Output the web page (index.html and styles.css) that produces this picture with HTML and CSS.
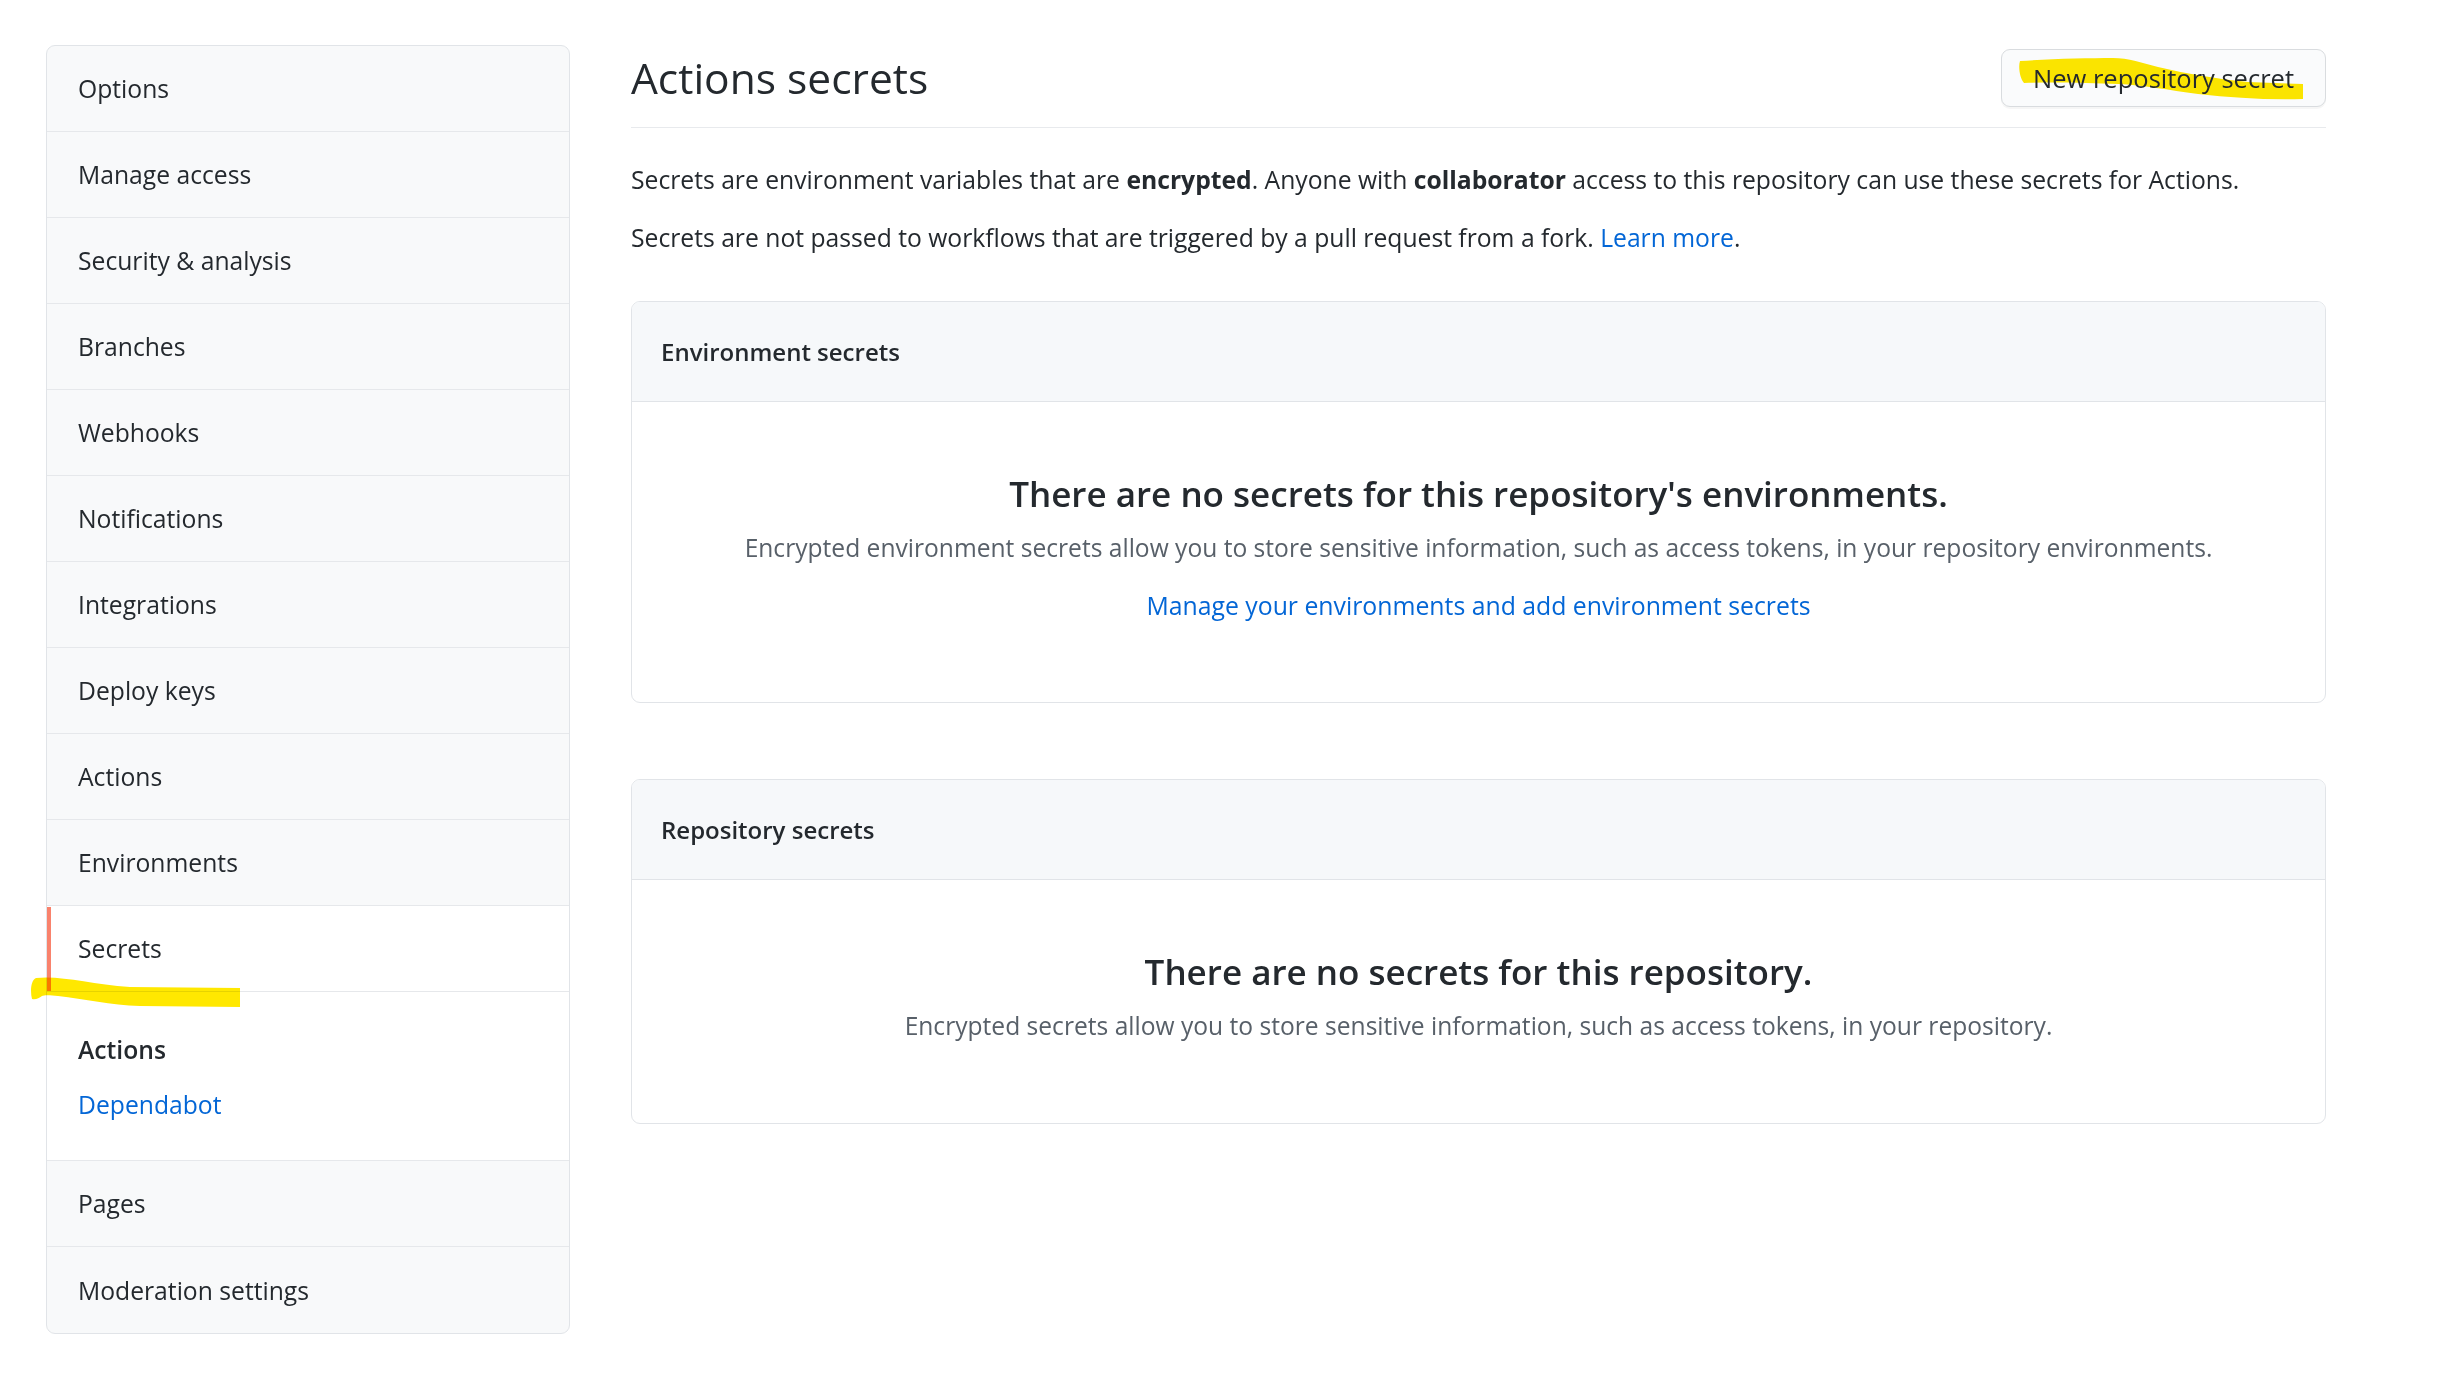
FILE: index.html
```html
<!DOCTYPE html>
<html lang="en">
<head>
  <meta charset="UTF-8" />
  <title>Actions secrets</title>
  <link rel="stylesheet" href="styles.css">
</head>
<body>

  <div class="layout">
    <nav class="menu">
      <a class="menu-item" href="#">Options</a>
      <a class="menu-item" href="#">Manage access</a>
      <a class="menu-item" href="#">Security &amp; analysis</a>
      <a class="menu-item" href="#">Branches</a>
      <a class="menu-item" href="#">Webhooks</a>
      <a class="menu-item" href="#">Notifications</a>
      <a class="menu-item" href="#">Integrations</a>
      <a class="menu-item" href="#">Deploy keys</a>
      <a class="menu-item" href="#">Actions</a>
      <a class="menu-item" href="#">Environments</a>
      <a class="menu-item selected" href="#">
        Secrets
        <svg class="marker marker-menu" viewBox="0 0 212 32" aria-hidden="true">
          <path d="M6 2 C30 -1 60 8 100 11 L210 12 L210 31 L110 30 C80 29 55 23 28 20 C20 19 14 19 12 20 C9 22 6 24 2 23 C0 15 1 4 6 2 Z" />
        </svg>
      </a>
      <div class="menu-group">
        <span class="group-title">Actions</span>
        <a class="group-link" href="#">Dependabot</a>
      </div>
      <a class="menu-item" href="#">Pages</a>
      <a class="menu-item" href="#">Moderation settings</a>
    </nav>

    <main class="content">
      <div class="subhead">
        <h2>Actions secrets</h2>
        <button class="btn">
          <svg class="marker marker-btn" viewBox="0 0 286 44" aria-hidden="true">
            <path d="M2 4 C30 2 70 1 95 1 C110 1 125 6 140 10 C170 17 200 22 230 25 L285 27 L285 42 C250 43 215 41 180 37 C150 33 125 28 100 27 C70 26 40 25 6 26 C2 22 0 10 2 4 Z" />
          </svg>
          <span>New repository secret</span>
        </button>
      </div>

      <p class="intro">Secrets are environment variables that are <strong>encrypted</strong>. Anyone with <strong>collaborator</strong> access to this repository can use these secrets for Actions.</p>
      <p class="intro">Secrets are not passed to workflows that are triggered by a pull request from a fork. <a href="#">Learn more</a>.</p>

      <section class="box">
        <div class="box-header">Environment secrets</div>
        <div class="blankslate">
          <h3>There are no secrets for this repository's environments.</h3>
          <p>Encrypted environment secrets allow you to store sensitive information, such as access tokens, in your repository environments.</p>
          <a class="blank-link" href="#">Manage your environments and add environment secrets</a>
        </div>
      </section>

      <section class="box">
        <div class="box-header">Repository secrets</div>
        <div class="blankslate">
          <h3>There are no secrets for this repository.</h3>
          <p>Encrypted secrets allow you to store sensitive information, such as access tokens, in your repository.</p>
        </div>
      </section>
    </main>
  </div>

</body>
</html>
```

FILE: styles.css
```css
* {
  box-sizing: border-box;
}

body {
  margin: 0;
  background-color: #fff;
  color: #24292e;
  font-family: "Open Sans", "Noto Sans", sans-serif;
  font-size: 24.7px;
}

a {
  color: #0366d6;
  text-decoration: none;
}

.layout {
  display: flex;
  gap: 61px;
  padding: 45px 114px 0 46px;
}

/* left menu */

.menu {
  flex: 0 0 524px;
  display: flex;
  flex-direction: column;
  border: 1px solid #e1e4e8;
  border-radius: 9px;
  background-color: #f8f9fa;
}

.menu-item {
  position: relative;
  display: flex;
  align-items: center;
  height: 86px;
  padding-left: 31px;
  color: #24292e;
  border-bottom: 1px solid #e6e8eb;
}

.menu-item:first-child {
  border-radius: 9px 9px 0 0;
}

.menu-item:last-child {
  border-bottom: none;
  border-radius: 0 0 9px 9px;
}

.menu-item.selected {
  background-color: #fff;
}

.menu-item.selected::before {
  content: "";
  position: absolute;
  left: 0;
  top: 1px;
  bottom: 0;
  width: 4px;
  background-color: #f9826c;
}

.menu-group {
  display: flex;
  flex-direction: column;
  gap: 21px;
  padding: 41px 0 38px 31px;
  background-color: #fff;
  border-bottom: 1px solid #e6e8eb;
  line-height: 34px;
}

.group-title {
  font-weight: 600;
}

/* highlighter strokes */

.marker {
  position: absolute;
  fill: #ffe800;
  mix-blend-mode: multiply;
  pointer-events: none;
}

.marker-menu {
  left: -17px;
  top: 70px;
  width: 212px;
  height: 32px;
}

.marker-btn {
  left: 16px;
  top: 7px;
  width: 286px;
  height: 44px;
}

/* main column */

.content {
  flex: 1;
  min-width: 0;
}

.subhead {
  display: flex;
  align-items: center;
  justify-content: space-between;
  padding: 4px 0 20px;
  border-bottom: 1px solid #e8eaed;
}

.subhead h2 {
  margin: 0;
  font-size: 42.5px;
  font-weight: 400;
  line-height: 58px;
}

.btn {
  position: relative;
  height: 58px;
  padding: 0 31px;
  font-family: inherit;
  font-size: 25.5px;
  font-weight: 500;
  color: #24292e;
  background-color: #fafbfc;
  border: 1px solid #d9dcdf;
  border-radius: 9px;
  box-shadow: 0 2px 0 rgba(27, 31, 35, 0.04);
}

.btn span {
  position: relative;
}

.intro {
  margin: 0;
  line-height: 36px;
}

.intro:first-of-type {
  margin-top: 34px;
}

.intro + .intro {
  margin-top: 22px;
}

.box {
  border: 1px solid #e1e4e8;
  border-radius: 9px;
  overflow: hidden;
  margin-top: 45px;
}

.box + .box {
  margin-top: 76px;
}

.box-header {
  display: flex;
  align-items: center;
  height: 100px;
  padding-left: 29px;
  background-color: #f6f8fa;
  border-bottom: 1px solid #e1e4e8;
  font-size: 24px;
  font-weight: 600;
}

.blankslate {
  display: flex;
  flex-direction: column;
  align-items: center;
  text-align: center;
  padding: 64px 32px 77px;
}

.blankslate h3 {
  margin: 0;
  font-size: 35px;
  font-weight: 600;
  line-height: 56px;
}

.blankslate p {
  margin: 6px 0 0;
  font-size: 24.6px;
  line-height: 40px;
  color: #586069;
}

.blank-link {
  margin-top: 17px;
  font-size: 24.8px;
  line-height: 40px;
}
```
